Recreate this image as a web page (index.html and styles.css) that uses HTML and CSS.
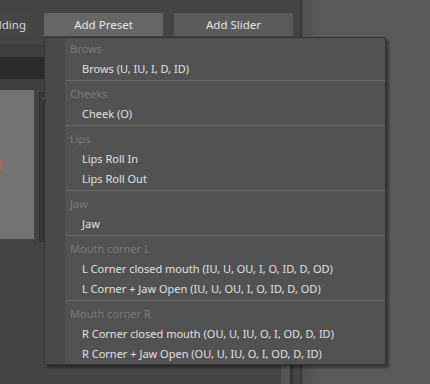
FILE: index.html
```html
<!DOCTYPE html>
<html lang="en">

<head>
	<meta charset="UTF-8">
	<meta name="viewport" content="width=device-width, initial-scale=1.0">
	<title>Presets</title>
	<link rel="stylesheet" href="styles.css">
</head>

<body>

	<div class="window">
		<div class="panel">
			<div class="toolbar">
				<button class="tool ghost">Building</button>
				<button class="tool active">Add Preset</button>
				<button class="tool">Add Slider</button>
			</div>
			<div class="strip"></div>
			<div class="strip dark"></div>
			<div class="strip"></div>
			<div class="content">
				<div class="preview"><span class="mark"></span></div>
				<div class="frame"><span class="dot"></span></div>
				<div class="spacer"></div>
				<div class="scroll"></div>
			</div>
		</div>
		<div class="side"></div>
	</div>

	<div class="menu">
		<div class="group">
			<div class="heading">Brows</div>
			<div class="item">Brows (U, IU, I, D, ID)</div>
		</div>
		<div class="sep"></div>
		<div class="group">
			<div class="heading">Cheeks</div>
			<div class="item">Cheek (O)</div>
		</div>
		<div class="sep"></div>
		<div class="group">
			<div class="heading">Lips</div>
			<div class="item">Lips Roll In</div>
			<div class="item">Lips Roll Out</div>
		</div>
		<div class="sep"></div>
		<div class="group">
			<div class="heading">Jaw</div>
			<div class="item">Jaw</div>
		</div>
		<div class="sep"></div>
		<div class="group">
			<div class="heading">Mouth corner L</div>
			<div class="item">L Corner closed mouth (IU, U, OU, I, O, ID, D, OD)</div>
			<div class="item">L Corner + Jaw Open (IU, U, OU, I, O, ID, D, OD)</div>
		</div>
		<div class="sep"></div>
		<div class="group">
			<div class="heading">Mouth corner R</div>
			<div class="item">R Corner closed mouth (OU, U, IU, O, I, OD, D, ID)</div>
			<div class="item">R Corner + Jaw Open (OU, U, IU, O, I, OD, D, ID)</div>
		</div>
	</div>

</body>

</html>
```

FILE: styles.css
```css
body {
	margin: 0;
	font-family: 'Noto Sans', 'Open Sans', sans-serif;
	font-size: 11px;
	background-color: #5a5a5a;
	overflow: hidden;
}

.window {
	display: flex;
	height: 384px;
}

.panel {
	width: 300px;
	display: flex;
	flex-direction: column;
	background-color: #444;
	border-right: 2px solid #383838;
}

.side {
	flex: 1;
	background: linear-gradient(to right, #4f4f4f, #5a5a5a 18px);
}

.toolbar {
	display: flex;
	gap: 11px;
	height: 46px;
	padding-top: 13px;
	box-sizing: border-box;
	border-bottom: 1px solid #393939;
}

.tool {
	width: 119px;
	height: 23px;
	border: none;
	padding: 0;
	background-color: #5b5b5b;
	color: #e6e6e6;
	font-family: inherit;
	font-size: 11.5px;
}

.tool.active {
	background-color: #666;
}

.tool.ghost {
	width: 33px;
	display: flex;
	align-items: center;
	justify-content: flex-end;
	padding-right: 7px;
	overflow: hidden;
	white-space: nowrap;
	background-color: #464646;
	color: #d8d8d8;
}

.strip {
	height: 11px;
	background-color: #3f3f3f;
}

.strip.dark {
	height: 22px;
	background-color: #2b2b2b;
}

.strip:last-of-type {
	height: 6px;
}

.content {
	flex: 1;
	display: flex;
	align-items: flex-start;
}

.preview {
	width: 34px;
	height: 149px;
	background-color: #737373;
	display: flex;
	align-items: center;
}

.mark {
	width: 2px;
	height: 10px;
	background-color: #b06464;
}

.frame {
	width: 3px;
	height: 148px;
	margin-left: 5px;
	margin-top: 2px;
	background-color: #3a3a3a;
	border: 1px solid #303030;
}

.dot {
	display: block;
	width: 1px;
	height: 1px;
	margin: 5px 0 0 3px;
	background-color: #c8c070;
}

.spacer {
	flex: 1;
}

.scroll {
	align-self: stretch;
	width: 9px;
	margin-right: 7px;
	background-color: #555;
	border-right: 3px solid #333;
}

/* popup over the panel */
.menu {
	position: absolute;
	left: 44px;
	top: 37px;
	width: 342px;
	box-sizing: border-box;
	padding-top: 1px;
	border: 1px solid #333;
	background: linear-gradient(to right, #484848 20px, #525252 20px);
	box-shadow: 3px 3px 2px rgba(0, 0, 0, 0.35);
}

.heading,
.item {
	height: 20px;
	line-height: 20px;
	white-space: nowrap;
}

.heading {
	padding-left: 25px;
	color: #7b7b7b;
}

.item {
	padding-left: 37px;
	color: #e0e0e0;
}

.sep {
	height: 1px;
	margin: 1px 0 3px 21px;
	background-color: #6a6a6a;
}
```
